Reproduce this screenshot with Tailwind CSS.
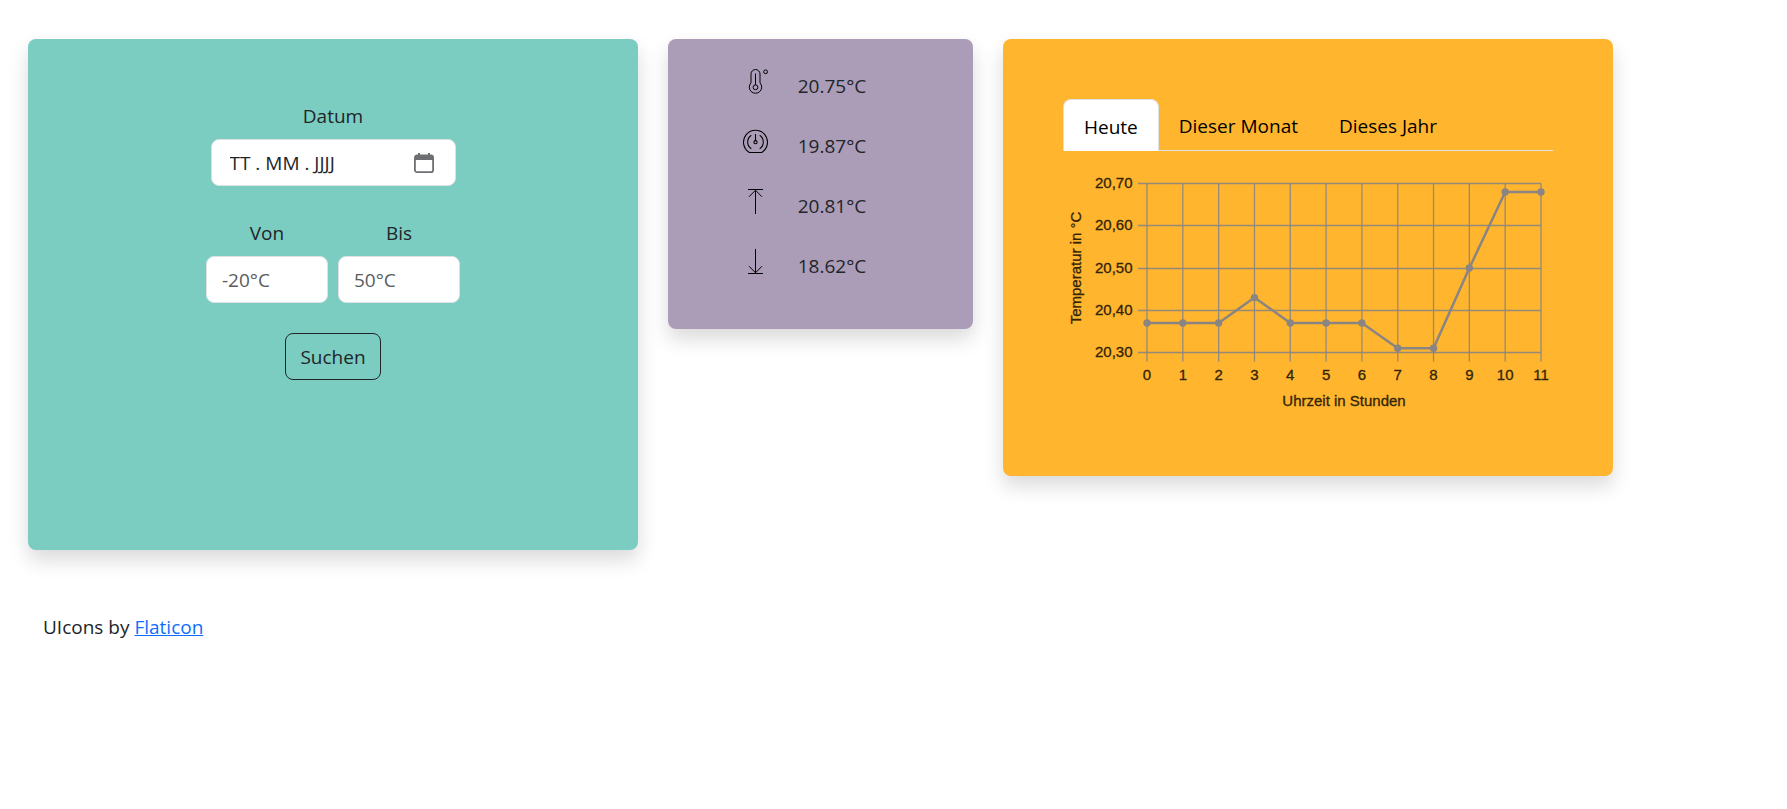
<!DOCTYPE html>
<html lang="de">
<head>
<meta charset="utf-8">
<meta name="viewport" content="width=device-width, initial-scale=1">
<title>Temperatur</title>
<script src="https://cdn.jsdelivr.net/npm/@tailwindcss/browser@4"></script>
</head>
<body class="bg-white font-['Open_Sans',sans-serif] text-[19px] leading-[30px] text-[#212529]">
<main class="grid grid-cols-1 items-start gap-[30px] pt-[39px] pr-7 pl-7 lg:grid-cols-[2fr_1fr_2fr] lg:pr-[174px]">

  <section class="rounded-lg bg-[#7bcdc1] px-6 pt-[62px] pb-[170px] shadow-[0_10px_20px_rgba(0,0,0,0.15)]">
    <form class="flex flex-col items-center">
      <label for="datum">Datum</label>
      <div class="mt-2 flex h-[47px] w-[245px] items-center rounded-lg border border-[#dee2e6] bg-white pr-[21px] pl-[18px]">
        <input id="datum" type="text" placeholder="TT . MM . JJJJ" class="w-full min-w-0 flex-1 bg-transparent outline-none placeholder:text-[#212529]">
        <button type="button" aria-label="Kalender öffnen" class="text-[#6e6f73]">
          <svg class="block size-5" viewBox="0 0 20 20" fill="none" aria-hidden="true">
            <rect x="0.900" y="2.500" width="18.200" height="16.600" rx="2.200" stroke="currentColor" stroke-width="1.800"/>
            <path d="M1 2.500h18v4.500H1zM4 0h2v3H4zM14 0h2v3h-2z" fill="currentColor"/>
          </svg>
        </button>
      </div>
      <div class="mt-8 flex gap-[10px]">
        <div class="flex w-[122px] flex-col items-center">
          <label for="von">Von</label>
          <input id="von" type="text" placeholder="-20°C" class="mt-2 h-[47px] w-full rounded-lg border border-[#dee2e6] bg-white px-[15px] outline-none placeholder:text-[#595c5f]">
        </div>
        <div class="flex w-[122px] flex-col items-center">
          <label for="bis">Bis</label>
          <input id="bis" type="text" placeholder="50°C" class="mt-2 h-[47px] w-full rounded-lg border border-[#dee2e6] bg-white px-[15px] outline-none placeholder:text-[#595c5f]">
        </div>
      </div>
      <button type="submit" class="mt-[30px] h-[47px] rounded-lg border border-[#212529] px-[14px]">Suchen</button>
    </form>
  </section>

  <section class="rounded-lg bg-[#ab9db7] pt-[30px] pb-5 pl-[24.5%] shadow-[0_10px_20px_rgba(0,0,0,0.15)]">
    <ul class="text-[#212529]">
      <li class="flex h-[60px] items-start gap-[30px]">
        <svg class="size-[25px] shrink-0 text-black" viewBox="0 0 25 25" fill="none" stroke="currentColor" role="img" aria-label="Aktuell">
          <path d="M8 13.800V5a4.500 4.500 0 0 1 9 0v8.800a6.200 6.200 0 1 1-9 0z"/>
          <circle cx="12.500" cy="18.300" r="2.400"/><path d="M12.500 4.500v11.400"/><circle cx="22.600" cy="2.800" r="1.900"/>
        </svg>
        <span class="mt-[2px]">20.75°C</span>
      </li>
      <li class="flex h-[60px] items-start gap-[30px]">
        <svg class="size-[25px] shrink-0 text-black" viewBox="0 0 25 25" fill="none" stroke="currentColor" stroke-width="1.100" role="img" aria-label="Durchschnitt">
          <path d="M6.300 23.500A12 12 0 1 1 18.700 23.500z" stroke-linejoin="round"/>
          <path d="M12.500 5v6.500M8.300 6.200a8.200 8.200 0 0 0 0 13.600M16.700 6.200a8.200 8.200 0 0 1 0 13.600"/><circle cx="12.500" cy="13.200" r="1.600"/>
        </svg>
        <span class="mt-[2px]">19.87°C</span>
      </li>
      <li class="flex h-[60px] items-start gap-[30px]">
        <svg class="size-[25px] shrink-0 text-black" viewBox="0 0 25 25" fill="none" stroke="currentColor" role="img" aria-label="Maximum">
          <path d="M5 .5h15M12.500 1v24M6 7.800 12.500 1.200 19 7.800"/>
        </svg>
        <span class="mt-[2px]">20.81°C</span>
      </li>
      <li class="flex h-[60px] items-start gap-[30px]">
        <svg class="size-[25px] shrink-0 text-black" viewBox="0 0 25 25" fill="none" stroke="currentColor" role="img" aria-label="Minimum">
          <path d="M5 24.500h15M12.500 0v24M6 17.200 12.500 23.800 19 17.200"/>
        </svg>
        <span class="mt-[2px]">18.62°C</span>
      </li>
    </ul>
  </section>

  <section class="rounded-lg bg-[#ffb52d] p-[60px] shadow-[0_10px_20px_rgba(0,0,0,0.15)]">
    <div role="tablist" class="flex h-[52px] border-b border-[#dee2e6] text-black">
      <button type="button" role="tab" aria-selected="true" class="-mb-px rounded-t-lg border border-b-0 border-[#dee2e6] bg-white px-5 pt-[2px]">Heute</button>
      <button type="button" role="tab" aria-selected="false" class="px-5 pt-[3px]">Dieser Monat</button>
      <button type="button" role="tab" aria-selected="false" class="px-[21px] pt-[3px]">Dieses Jahr</button>
    </div>
    <svg class="block h-auto w-full font-['Liberation_Sans',sans-serif] text-[15px]" viewBox="0 0 490 265" role="img" aria-label="Temperaturverlauf heute">
      <g id="grid" stroke="#8a8583" stroke-opacity="0.900" stroke-width="1.300"></g>
      <g id="labels" fill="#332408" stroke="#332408" stroke-width="0.300"></g>
      <polyline id="line" fill="none" stroke="#8a8583" stroke-width="2.500" stroke-linejoin="round"/>
      <g id="dots" fill="#8a8583"></g>
    </svg>
  </section>
</main>

<footer class="mt-[62px] px-[43px]">UIcons by <a href="https://www.flaticon.com/uicons" class="text-[#0d6efd] underline">Flaticon</a></footer>

<script>
  const ns = 'http://www.w3.org/2000/svg';
  function add(id, tag, attrs, text) {
    const el = document.createElementNS(ns, tag);
    for (const k in attrs) el.setAttribute(k, attrs[k]);
    if (text) el.textContent = text;
    document.getElementById(id).appendChild(el);
  }
  const left = 84, right = 478, top0 = 32.5, bottom = 201.5;
  const values = [20.37, 20.37, 20.37, 20.43, 20.37, 20.37, 20.37, 20.31, 20.31, 20.5, 20.68, 20.68];
  const px = i => left + (right - left) * i / 11;
  const py = v => bottom - (v - 20.3) / 0.4 * (bottom - top0);
  ['20,30', '20,40', '20,50', '20,60', '20,70'].forEach((t, i) => {
    const y = Math.floor(py(20.3 + i / 10) + 0.1) + 0.5;
    add('grid', 'line', { x1: left - 9, x2: right, y1: y, y2: y });
    add('labels', 'text', { x: 69.5, y: y + 4.5, 'text-anchor': 'end' }, t);
  });
  values.forEach((v, i) => {
    const x = px(i);
    add('grid', 'line', { x1: x, x2: x, y1: top0, y2: bottom + 9 });
    add('labels', 'text', { x: x, y: 229, 'text-anchor': 'middle' }, String(i));
    add('dots', 'circle', { cx: x, cy: py(v), r: 3.7 });
  });
  document.getElementById('line').setAttribute('points', values.map((v, i) => px(i) + ',' + py(v)).join(' '));
  add('labels', 'text', { x: 281, y: 255, 'text-anchor': 'middle' }, 'Uhrzeit in Stunden');
  add('labels', 'text', { transform: 'translate(18 117) rotate(-90)', 'text-anchor': 'middle' }, 'Temperatur in °C');
</script>
</body>
</html>
